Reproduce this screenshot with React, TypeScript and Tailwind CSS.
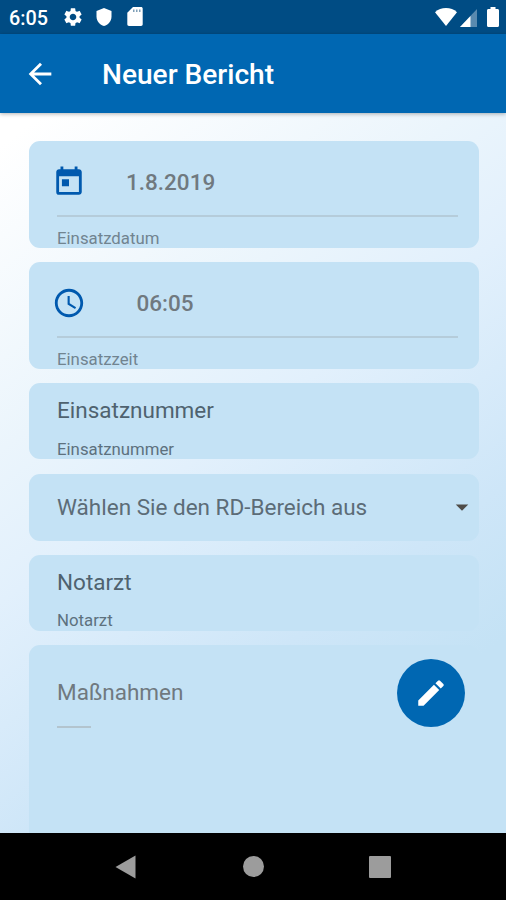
import React from "react";
import {
  MdAccessTime,
  MdArrowBack,
  MdArrowDropDown,
  MdEdit,
  MdSettings,
  MdToday,
} from "react-icons/md";

interface PickerCardProps {
  icon: React.ReactNode;
  value: string;
  label: string;
  valueClass: string;
}

const StatusBar: React.FC = () => (
  <div className="h-[34px] shrink-0 bg-[#004c84] flex items-center justify-between pl-[9px] pr-[7.5px] text-white">
    <div className="flex items-center">
      <span className="w-[39px] text-[19.8px] leading-none font-medium whitespace-nowrap mt-[3px]">
        6:05
      </span>
      <MdSettings className="ml-[14px] w-[22px] h-[22px]" />
      <svg className="ml-[12px]" width="16" height="18" viewBox="0 0 16 18">
        <path
          d="M8 0L15.5 3V8.5C15.5 13 12.3 16.8 8 18C3.7 16.8 0.5 13 0.5 8.5V3Z"
          fill="white"
        />
      </svg>
      <svg className="ml-[15px]" width="16" height="19" viewBox="0 0 16 19">
        <path
          d="M6 0H14C15 0 15.7 0.7 15.7 1.7V17.3C15.7 18.3 15 19 14 19H2C1 19 0.3 18.3 0.3 17.3V5.8Z"
          fill="white"
        />
        <path d="M6 2.5H7.5V5H6ZM9 2.5H10.5V5H9ZM12 2.5H13.5V5H12Z" fill="#7f9fb8" />
      </svg>
    </div>
    <div className="flex items-center">
      <svg width="22" height="18" viewBox="0 0 22 18">
        <path d="M11 18L0 4.2C3 1.4 6.8 0 11 0C15.2 0 19 1.4 22 4.2Z" fill="white" />
      </svg>
      <svg className="ml-[3px] mt-[2px]" width="17" height="18" viewBox="0 0 17 18">
        <path d="M17 0V18H0Z" fill="white" fillOpacity="0.35" />
        <path d="M10.5 6.9V18H0Z" fill="white" />
      </svg>
      <svg className="ml-[10px]" width="12" height="20" viewBox="0 0 12 20">
        <path
          d="M3.5 0H8.5V2H10.5C11.4 2 12 2.6 12 3.5V18.5C12 19.4 11.4 20 10.5 20H1.5C0.6 20 0 19.4 0 18.5V3.5C0 2.6 0.6 2 1.5 2H3.5Z"
          fill="white"
        />
      </svg>
    </div>
  </div>
);

const AppBar: React.FC = () => (
  <header className="relative h-[79px] shrink-0 bg-[#0067b2] flex items-center pl-[23px] text-white shadow-[0_1px_4px_rgba(0,0,0,0.3)]">
    <MdArrowBack className="w-[34px] h-[34px]" />
    <h1 className="ml-[45px] text-[28.1px] leading-8 font-medium whitespace-nowrap mt-[3px]">
      Neuer Bericht
    </h1>
  </header>
);

const PickerCard: React.FC<PickerCardProps> = ({ icon, value, label, valueClass }) => (
  <div className="h-[107px] shrink-0 rounded-[11px] bg-[#c4e2f5] pl-[28px] pr-[21px] overflow-hidden">
    <div className="h-[76px] flex items-center pt-[7px] border-b-2 border-[#b5ccda]">
      <div className="w-[34px] -ml-[4.5px] text-[#0059ae]">{icon}</div>
      <span className={valueClass}>{value}</span>
    </div>
    <p className="mt-[9.5px] pl-[0.5px] text-[16.8px] leading-[22px] text-[#718490]">{label}</p>
  </div>
);

const FieldCard: React.FC<{ label: string }> = ({ label }) => (
  <div className="h-[76px] shrink-0 rounded-[11px] bg-[#c4e2f5] px-[28.5px] pt-[11px] overflow-hidden">
    <p className="text-[22.5px] leading-[32px] text-[#4f626f]">{label}</p>
    <p className="mt-[11.5px] text-[16.8px] leading-[22px] text-[#5d717e]">{label}</p>
  </div>
);

const NavBar: React.FC = () => (
  <nav className="h-[67px] shrink-0 bg-black flex items-center justify-between px-[115px]">
    <svg width="21" height="24" viewBox="0 0 21 24">
      <path d="M0.5 12L20.5 0.5V23.5Z" fill="#9c9c9c" />
    </svg>
    <div className="ml-[2px] w-[21px] h-[21px] rounded-full bg-[#9c9c9c]" />
    <div className="w-[22px] h-[22px] rounded-[1px] bg-[#9c9c9c]" />
  </nav>
);

const App: React.FC = () => {
  return (
    <div className="w-full h-[900px] flex flex-col overflow-hidden font-[Roboto,sans-serif]">
      <StatusBar />
      <AppBar />

      <main className="flex-1 min-h-0 overflow-hidden bg-[linear-gradient(144deg,#ffffff_3%,#ebf5fc_31%,#e2f0fc_45%,#cee6f8_68%,#c4e2f5_82%)] pt-[28px] pl-[28.5px] pr-[27.5px] flex flex-col gap-[14.2px]">
        <PickerCard
          icon={<MdToday className="w-[34px] h-[34px]" />}
          value="1.8.2019"
          label="Einsatzdatum"
          valueClass="ml-[40px] mt-[2px] text-[22.5px] font-medium text-[#70797f]"
        />
        <PickerCard
          icon={<MdAccessTime className="w-[34px] h-[34px]" />}
          value="06:05"
          label="Einsatzzeit"
          valueClass="ml-[50.5px] mt-[2px] text-[22.5px] font-medium text-[#70797f]"
        />
        <FieldCard label="Einsatznummer" />

        {/* Dropdown */}
        <div className="h-[67px] shrink-0 rounded-[11px] bg-[#c4e2f5] pl-[28.5px] pr-[2px] flex items-center justify-between">
          <span className="text-[22.5px] text-[#5c6c77] whitespace-nowrap mt-[1px]">
            Wählen Sie den RD-Bereich aus
          </span>
          <MdArrowDropDown className="w-[30px] h-[30px] text-[#4f4c48]" />
        </div>

        <FieldCard label="Notarzt" />

        <div className="h-[220px] shrink-0 rounded-[11px] bg-[#c4e2f5] pl-[28px] pr-[14px] pt-[14px]">
          <div className="flex items-center justify-between">
            <span className="text-[22.5px] text-[#70797f] -mt-[1px] pl-[0.5px]">Maßnahmen</span>
            <button className="w-[68px] h-[68px] rounded-full bg-[#0067b2] text-white flex items-center justify-center">
              <MdEdit className="w-[34px] h-[34px]" />
            </button>
          </div>
          <div className="w-[34px] h-[2px] -mt-[1px] bg-[#b3c4ce]" />
        </div>
      </main>

      <NavBar />
    </div>
  );
};

export default App;
